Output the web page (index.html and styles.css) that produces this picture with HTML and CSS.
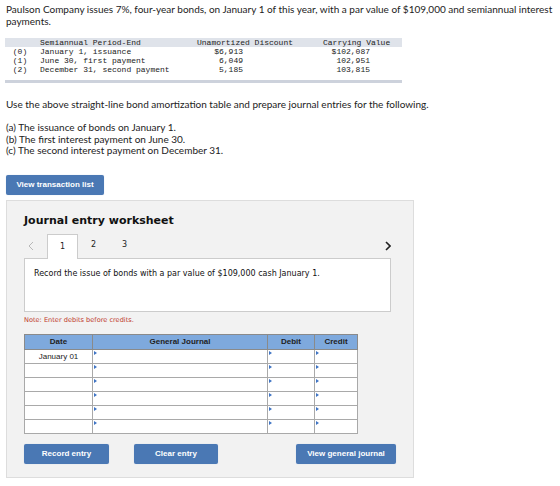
FILE: index.html
```html
<!DOCTYPE html>
<html lang="en">
<head>
    <meta charset="UTF-8">
    <title>Journal entry worksheet</title>
    <link rel="stylesheet" href="styles.css">
</head>
<body>
    <div class="page">
        <p class="intro">Paulson Company issues 7%, four-year bonds, on January 1 of this year, with a par value of $109,000 and semiannual interest payments.</p>

        <table class="bonds">
            <thead>
                <tr>
                    <th class="idx"></th>
                    <th class="period">Semiannual Period-End</th>
                    <th class="disc">Unamortized Discount</th>
                    <th class="carry">Carrying Value</th>
                </tr>
            </thead>
            <tbody>
                <tr><td class="idx">(0)</td><td class="period">January 1, issuance</td><td class="disc">$6,913</td><td class="carry">$102,087</td></tr>
                <tr><td class="idx">(1)</td><td class="period">June 30, first payment</td><td class="disc">6,049</td><td class="carry">102,951</td></tr>
                <tr><td class="idx">(2)</td><td class="period">December 31, second payment</td><td class="disc">5,185</td><td class="carry">103,815</td></tr>
            </tbody>
            <tfoot>
                <tr><td colspan="4"></td></tr>
            </tfoot>
        </table>

        <p class="ask">Use the above straight-line bond amortization table and prepare journal entries for the following.</p>

        <ul class="parts">
            <li>(a) The issuance of bonds on January 1.</li>
            <li>(b) The first interest payment on June 30.</li>
            <li>(c) The second interest payment on December 31.</li>
        </ul>

        <button class="btn btn-list">View transaction list</button>

        <div class="worksheet">
            <h2>Journal entry worksheet</h2>

            <div class="tabs">
                <span class="arrow prev">
                    <svg width="6" height="10" viewBox="0 0 6 10"><path d="M5 1 L1 5 L5 9" fill="none" stroke="#b8b8b8" stroke-width="1"/></svg>
                </span>
                <span class="tab active">1</span>
                <span class="tab">2</span>
                <span class="tab">3</span>
                <span class="arrow next">
                    <svg width="6" height="10" viewBox="0 0 6 10"><path d="M1 1 L5 5 L1 9" fill="none" stroke="#222" stroke-width="1.6"/></svg>
                </span>
            </div>

            <div class="task">Record the issue of bonds with a par value of $109,000 cash January 1.</div>

            <p class="note">Note: Enter debits before credits.</p>

            <table class="journal">
                <thead>
                    <tr>
                        <th class="c-date">Date</th>
                        <th class="c-gj">General Journal</th>
                        <th class="c-dr">Debit</th>
                        <th class="c-cr">Credit</th>
                    </tr>
                </thead>
                <tbody id="rows"></tbody>
            </table>

            <div class="actions">
                <button class="btn btn-record">Record entry</button>
                <button class="btn btn-clear">Clear entry</button>
                <button class="btn btn-view">View general journal</button>
            </div>
        </div>
    </div>

    <script>
        const rows = document.getElementById('rows');
        const dates = ['January 01', '', '', '', '', ''];

        dates.forEach((date) => {
            const tr = document.createElement('tr');
            tr.innerHTML =
                `<td class="c-date">${date}</td>` +
                '<td class="c-gj"><i class="mark"></i></td>' +
                '<td class="c-dr"><i class="mark"></i></td>' +
                '<td class="c-cr"><i class="mark"></i></td>';
            rows.appendChild(tr);
        });
    </script>
</body>
</html>
```

FILE: styles.css
```css
body {
    margin: 0;
    background-color: #ffffff;
    color: #222222;
    font-family: Lato, 'Helvetica Neue', Arial, sans-serif;
}

.page {
    padding: 3px 6px 0 6px;
}

.intro {
    margin: 0;
    font-size: 10px;
    line-height: 12px;
    width: 552px;
}

/* bond amortization table */
.bonds {
    margin: 11px 0 0 -1px;
    width: 397px;
    border-collapse: collapse;
    table-layout: fixed;
    font-family: 'Liberation Mono', 'Courier New', monospace;
    font-size: 8px;
    line-height: 9px;
    color: #222222;
}

.bonds th {
    background-color: #dfe3ea;
    font-weight: normal;
    padding: 0;
    height: 9px;
}

.bonds td {
    padding: 0;
    height: 9px;
}

.bonds .idx {
    width: 30px;
    text-align: center;
}

.bonds .period {
    width: 150px;
    text-align: left;
    padding-left: 5px;
}

.bonds .disc {
    width: 110px;
    text-align: right;
    padding-right: 57px;
}

.bonds th.disc {
    text-align: center;
    padding-right: 0;
}

.bonds .carry {
    text-align: right;
    padding-right: 32px;
}

.bonds th.carry {
    text-align: left;
    padding-left: 23px;
    padding-right: 0;
}

.bonds tfoot td {
    height: 0;
    border-top: 6px solid #ffffff;
    border-bottom: 3px solid #cdd2dc;
}

.ask {
    margin: 15px 0 0 0;
    font-size: 10px;
    line-height: 12px;
}

.parts {
    list-style: none;
    margin: 12px 0 0 0;
    padding: 0;
    font-size: 10px;
    line-height: 11.5px;
}

/* buttons */
.btn {
    display: block;
    border: none;
    border-radius: 2px;
    background-color: #4a78b4;
    color: #ffffff;
    font-family: 'Liberation Sans', Arial, sans-serif;
    font-weight: bold;
    font-size: 8px;
    padding: 0;
    height: 20px;
    box-shadow: 0 0 1px #b9c7da;
}

.btn-list {
    margin-top: 18px;
    width: 98px;
}

/* worksheet panel */
.worksheet {
    margin-top: 5px;
    width: 389px;
    height: 276px;
    padding: 0 0 0 17px;
    background-color: #f2f2f2;
    border: 1px solid #dddddd;
}

.worksheet h2 {
    margin: 13px 0 0 0;
    font-family: 'DejaVu Sans', Verdana, sans-serif;
    font-size: 11px;
    line-height: 14px;
    color: #111111;
}

.tabs {
    display: flex;
    align-items: flex-end;
    margin-top: 6px;
    height: 24px;
    width: 367px;
    font-family: 'DejaVu Sans', Verdana, sans-serif;
    font-size: 8px;
    color: #222222;
}

.tab {
    width: 31px;
    height: 24px;
    line-height: 22px;
    text-align: center;
    box-sizing: border-box;
}

.tab.active {
    background-color: #ffffff;
    border: 1px solid #cccccc;
    border-bottom: none;
    height: 25px;
    margin-bottom: -1px;
    line-height: 23px;
    position: relative;
    z-index: 1;
}

.arrow {
    display: flex;
    align-items: center;
    height: 24px;
}

.prev {
    width: 23px;
    padding-left: 4px;
    box-sizing: border-box;
}

.next {
    margin-left: auto;
    width: 6px;
}

.task {
    height: 52px;
    background-color: #ffffff;
    border: 1px solid #cccccc;
    padding: 0 0 0 9px;
    width: 356px;
    font-family: 'DejaVu Sans', Verdana, sans-serif;
    font-size: 8px;
    line-height: 29px;
    color: #111111;
}

.note {
    margin: 4px 0 0 0;
    font-family: 'DejaVu Sans', Verdana, sans-serif;
    font-size: 6.6px;
    line-height: 9px;
    color: #c0392b;
}

/* journal table */
.journal {
    margin-top: 9px;
    width: 334px;
    border-collapse: collapse;
    table-layout: fixed;
    font-family: 'Liberation Sans', Arial, sans-serif;
    font-size: 8px;
    border: 1px solid #a0a0a0;
}

.journal th {
    background-color: #7ea9dd;
    border: 1px solid #8a8a8a;
    height: 14px;
    padding: 0;
    font-weight: bold;
    color: #1e1e1e;
}

.journal td {
    background-color: #ffffff;
    border: 1px solid #a9a9a9;
    height: 13px;
    padding: 0;
    position: relative;
    text-align: center;
    color: #222222;
}

.journal .c-date {
    width: 67px;
}

.journal .c-gj {
    width: 174px;
}

.journal .c-dr {
    width: 46px;
}

.mark {
    position: absolute;
    left: 1px;
    top: 1px;
    width: 0;
    height: 0;
    border-top: 2px solid transparent;
    border-bottom: 2px solid transparent;
    border-left: 3px solid #3f74c4;
}

.actions {
    display: flex;
    margin-top: 10px;
    width: 372px;
}

.btn-record {
    width: 85px;
}

.btn-clear {
    width: 84px;
    margin-left: 25px;
}

.btn-view {
    width: 100px;
    margin-left: auto;
}
```
